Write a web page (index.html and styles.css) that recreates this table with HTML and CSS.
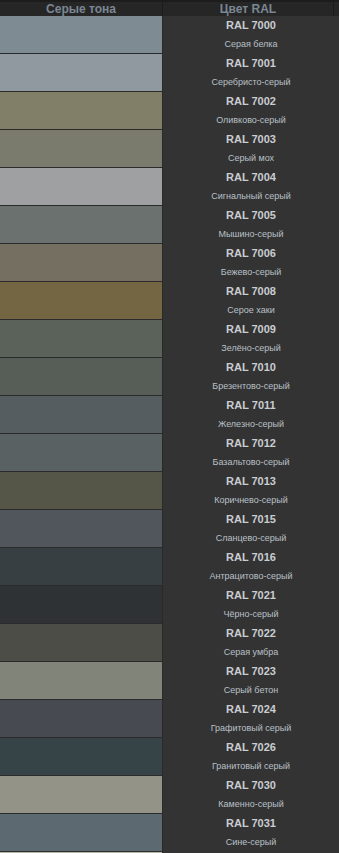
FILE: index.html
```html
<!DOCTYPE html>
<html lang="ru">
<head>
<meta charset="utf-8">
<title>Серые тона RAL</title>
<link rel="stylesheet" href="styles.css">
</head>
<body>
<div class="table">
  <div class="head">
    <div class="hcell hleft">Серые тона</div>
    <div class="hcell hright">Цвет RAL</div>
    <div class="hcell hextra"></div>
  </div>
  <div class="row"><div class="sw c7000"></div><div class="info"><div class="code">RAL 7000</div><div class="name">Серая белка</div></div></div>
  <div class="row"><div class="sw c7001"></div><div class="info"><div class="code">RAL 7001</div><div class="name">Серебристо-серый</div></div></div>
  <div class="row"><div class="sw c7002"></div><div class="info"><div class="code">RAL 7002</div><div class="name">Оливково-серый</div></div></div>
  <div class="row"><div class="sw c7003"></div><div class="info"><div class="code">RAL 7003</div><div class="name">Серый мох</div></div></div>
  <div class="row"><div class="sw c7004"></div><div class="info"><div class="code">RAL 7004</div><div class="name">Сигнальный серый</div></div></div>
  <div class="row"><div class="sw c7005"></div><div class="info"><div class="code">RAL 7005</div><div class="name">Мышино-серый</div></div></div>
  <div class="row"><div class="sw c7006"></div><div class="info"><div class="code">RAL 7006</div><div class="name">Бежево-серый</div></div></div>
  <div class="row"><div class="sw c7008"></div><div class="info"><div class="code">RAL 7008</div><div class="name">Серое хаки</div></div></div>
  <div class="row"><div class="sw c7009"></div><div class="info"><div class="code">RAL 7009</div><div class="name">Зелёно-серый</div></div></div>
  <div class="row"><div class="sw c7010"></div><div class="info"><div class="code">RAL 7010</div><div class="name">Брезентово-серый</div></div></div>
  <div class="row"><div class="sw c7011"></div><div class="info"><div class="code">RAL 7011</div><div class="name">Железно-серый</div></div></div>
  <div class="row"><div class="sw c7012"></div><div class="info"><div class="code">RAL 7012</div><div class="name">Базальтово-серый</div></div></div>
  <div class="row"><div class="sw c7013"></div><div class="info"><div class="code">RAL 7013</div><div class="name">Коричнево-серый</div></div></div>
  <div class="row"><div class="sw c7015"></div><div class="info"><div class="code">RAL 7015</div><div class="name">Сланцево-серый</div></div></div>
  <div class="row"><div class="sw c7016"></div><div class="info"><div class="code">RAL 7016</div><div class="name">Антрацитово-серый</div></div></div>
  <div class="row"><div class="sw c7021"></div><div class="info"><div class="code">RAL 7021</div><div class="name">Чёрно-серый</div></div></div>
  <div class="row"><div class="sw c7022"></div><div class="info"><div class="code">RAL 7022</div><div class="name">Серая умбра</div></div></div>
  <div class="row"><div class="sw c7023"></div><div class="info"><div class="code">RAL 7023</div><div class="name">Серый бетон</div></div></div>
  <div class="row"><div class="sw c7024"></div><div class="info"><div class="code">RAL 7024</div><div class="name">Графитовый серый</div></div></div>
  <div class="row"><div class="sw c7026"></div><div class="info"><div class="code">RAL 7026</div><div class="name">Гранитовый серый</div></div></div>
  <div class="row"><div class="sw c7030"></div><div class="info"><div class="code">RAL 7030</div><div class="name">Каменно-серый</div></div></div>
  <div class="row"><div class="sw c7031"></div><div class="info"><div class="code">RAL 7031</div><div class="name">Сине-серый</div></div></div>
  <div class="row"><div class="sw c7032"></div><div class="info"></div></div>
</div>
</body>
</html>
```

FILE: styles.css
```css
html, body {
  margin: 0;
  padding: 0;
  background: #333333;
  font-family: "Liberation Sans", Arial, sans-serif;
}

.table {
  display: flex;
  flex-direction: column;
}

.head {
  display: flex;
  height: 14px;
  border-top: 2px solid #1c1c1c;
  background: #262626;
}

.hcell {
  font-size: 12px;
  font-weight: bold;
  line-height: 14px;
  color: #7b8793;
  text-align: center;
}

.hleft {
  width: 162px;
  border-right: 1px solid #1c1c1c;
}

.hright {
  width: 170px;
  border-right: 1px solid #1c1c1c;
}

.hextra {
  flex: 1;
}

.row {
  display: flex;
  height: 38px;
}

.sw {
  width: 162px;
  height: 37px;
  border-bottom: 1px solid #2b2b2b;
  border-right: 1px solid #2a2a2a;
}

.info {
  flex: 1;
  background: #333333;
  text-align: center;
  padding-top: 2px;
  width: 170px;
}

.code {
  font-size: 11px;
  font-weight: bold;
  line-height: 14px;
  color: #c9cdd1;
}

.name {
  font-size: 9px;
  line-height: 12px;
  margin-top: 6px;
  color: #b9c0c7;
}

.c7000 { background: #7e8b92; }
.c7001 { background: #8f999f; }
.c7002 { background: #817f68; }
.c7003 { background: #7a7b6d; }
.c7004 { background: #9ea0a1; }
.c7005 { background: #6b716f; }
.c7006 { background: #756f61; }
.c7008 { background: #746643; }
.c7009 { background: #5b6259; }
.c7010 { background: #575d57; }
.c7011 { background: #555d61; }
.c7012 { background: #596163; }
.c7013 { background: #555548; }
.c7015 { background: #51565c; }
.c7016 { background: #373f43; }
.c7021 { background: #2e3234; }
.c7022 { background: #4b4d46; }
.c7023 { background: #818479; }
.c7024 { background: #474a50; }
.c7026 { background: #374447; }
.c7030 { background: #939388; }
.c7031 { background: #5d6970; }
.c7032 { background: #b9b9a8; }
```
